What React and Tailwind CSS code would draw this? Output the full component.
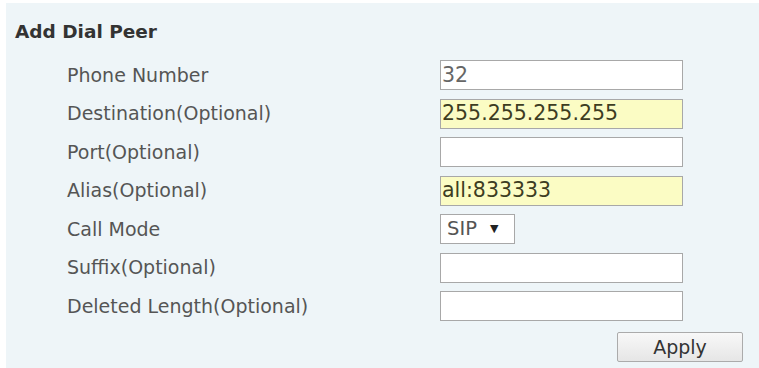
import React from 'react';

const rows = [
  { label: 'Phone Number', value: '32' },
  { label: 'Destination(Optional)', value: '255.255.255.255', filled: true },
  { label: 'Port(Optional)', value: '' },
  { label: 'Alias(Optional)', value: 'all:833333', filled: true },
  { label: 'Call Mode', select: 'SIP' },
  { label: 'Suffix(Optional)', value: '' },
  { label: 'Deleted Length(Optional)', value: '' },
];

const App = () => {
  return (
    <div className="w-[759px] h-[368px] bg-white pl-[6px] pt-[3px] overflow-hidden" style={{ fontFamily: '"DejaVu Sans", Verdana, sans-serif' }}>
      <div className="h-full bg-[#eef5f8]">
        <div className="h-[57px] pl-[9px] pt-[16px] text-[18.5px] leading-[26px] font-bold text-[#333]">Add Dial Peer</div>
        <div className="flex flex-col gap-[8.5px]">
          {rows.map(row => (
            <div key={row.label} className="flex items-center h-[30px]">
              <div className="w-[434px] pl-[61px] text-[19px] text-[#555]">{row.label}</div>
              {row.select ? (
                <div className="w-[75px] h-[30px] border border-[#a8a8a8] bg-white flex items-center pl-[6px] text-[19.5px] text-[#555]">
                  <span>{row.select}</span>
                  <span className="ml-[13px] text-[11px] text-[#222]">▼</span>
                </div>
              ) : (
                <div className={`w-[243px] h-[30px] border border-[#a8a8a8] flex items-center pl-[1px] text-[20.5px] ${row.filled ? 'bg-[#fbfcc4] text-[#3d3d22]' : 'bg-white text-[#666]'}`}>
                  {row.value}
                </div>
              )}
            </div>
          ))}
        </div>
        <div className="flex justify-end pr-[10px] mt-[11px]">
          <button className="w-[126px] h-[30px] border border-[#ababab] rounded-[2px] bg-gradient-to-b from-[#f8f8f8] to-[#e6e6e6] text-[19px] text-[#333] mr-[6px]">Apply</button>
        </div>
      </div>
    </div>
  );
};

export default App;
